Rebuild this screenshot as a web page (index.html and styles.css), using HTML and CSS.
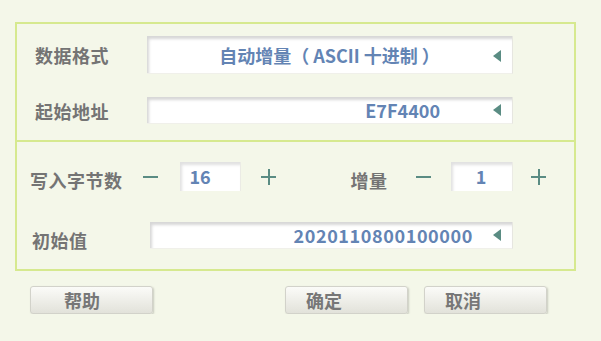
FILE: index.html
```html
<!DOCTYPE html>
<html>
<head>
    <meta charset="utf-8">
    <title>自动增量设置</title>
    <link rel="stylesheet" href="styles.css">
</head>
<body>
    <div class="panel">
        <div class="section section-top">
            <div class="row row-format">
                <span class="label">数据格式</span>
                <div class="field field-tall field-center">
                    <span class="value">自动增量（ ASCII 十进制 ）</span>
                    <span class="arrow"></span>
                </div>
            </div>
            <div class="row row-addr">
                <span class="label">起始地址</span>
                <div class="field field-addr">
                    <span class="value">E7F4400</span>
                    <span class="arrow"></span>
                </div>
            </div>
        </div>
        <div class="section section-bottom">
            <div class="row row-count">
                <span class="label label-count">写入字节数</span>
                <span class="step minus"></span>
                <div class="num">16</div>
                <span class="step plus"></span>
                <span class="label label-inc">增量</span>
                <span class="step minus"></span>
                <div class="num num-inc">1</div>
                <span class="step plus"></span>
            </div>
            <div class="row row-init">
                <span class="label label-init">初始值</span>
                <div class="field field-init">
                    <span class="value">2020110800100000</span>
                    <span class="arrow"></span>
                </div>
            </div>
        </div>
    </div>
    <div class="buttons">
        <button type="button" class="btn btn-help">帮助</button>
        <button type="button" class="btn btn-ok">确定</button>
        <button type="button" class="btn">取消</button>
    </div>
</body>
</html>
```

FILE: styles.css
```css
body {
    margin: 0;
    background: #f4f7e9;
    font-family: "Noto Sans CJK SC", "Noto Sans", sans-serif;
    font-weight: bold;
    font-size: 18px;
    color: #747474;
}
.panel {
    margin: 22px 0 0 15px;
    width: 557px;
    border: 2px solid #d6e98f;
}
.section-top {
    height: 118px;
    padding: 12px 0 0 18px;
    box-sizing: border-box;
    border-bottom: 2px solid #d6e98f;
}
.section-bottom {
    height: 127px;
    padding: 20px 0 0 13px;
    box-sizing: border-box;
}
.row {
    display: flex;
    align-items: center;
}
.row-addr {
    margin-top: 23px;
}
.label {
    width: 112px;
    flex: none;
    letter-spacing: 0.5px;
}
.field {
    width: 366px;
    height: 27px;
    background: #fff;
    box-shadow: inset 2px 3px 3px rgba(0, 0, 0, 0.16);
    border-right: 1px solid #e6e6e0;
    border-bottom: 1px solid #f0f0ea;
    display: flex;
    align-items: center;
    justify-content: flex-end;
    box-sizing: border-box;
    padding-right: 11px;
    color: #6384b4;
}
.field-tall {
    height: 38px;
}
.field-center {
    justify-content: center;
    position: relative;
    padding-right: 0;
}
.field-center .arrow {
    position: absolute;
    right: 11px;
    top: 14px;
}
.field-addr .value {
    margin-right: 53px;
}
.field-init {
    width: 363px;
}
.field-init .value {
    margin-right: 20px;
    letter-spacing: 0.6px;
}
.arrow {
    width: 0;
    height: 0;
    border-top: 6px solid transparent;
    border-bottom: 6px solid transparent;
    border-right: 8px solid #5a8c83;
}
.label-count {
    width: auto;
    margin-right: 20px;
}
.step {
    width: 15px;
    height: 15px;
    flex: none;
    position: relative;
}
.step::before,
.plus::after {
    content: "";
    position: absolute;
    background: #5a8c83;
}
.step::before {
    left: 0;
    top: 7px;
    width: 15px;
    height: 2px;
}
.plus::after {
    left: 7px;
    top: 0;
    width: 2px;
    height: 16px;
}
.num {
    width: 61px;
    height: 29px;
    margin: 0 20px 0 22px;
    background: #fff;
    box-shadow: inset 2px 3px 3px rgba(0, 0, 0, 0.12);
    border-right: 1px solid #ebebe5;
    box-sizing: border-box;
    padding-left: 10px;
    line-height: 29px;
    color: #6384b4;
}
.num-inc {
    width: 62px;
    padding-left: 0;
    text-align: center;
    margin: 0 18px 0 20px;
}
.label-inc {
    width: auto;
    margin: 0 28px 0 75px;
}
.row-count .label {
    position: relative;
    top: 3px;
}
.row-init {
    margin-top: 31px;
}
.label-init {
    width: 118px;
    margin-left: 2px;
    position: relative;
    top: 4px;
}
.buttons {
    display: flex;
    margin: 15px 0 0 30px;
}
.btn {
    width: 123px;
    height: 28px;
    padding: 0 0 0 20px;
    text-align: left;
    font-family: inherit;
    font-weight: bold;
    font-size: 18px;
    color: #777;
    background: linear-gradient(#fbfbf8, #e2e2da);
    border: 1px solid #d2d2ca;
    border-radius: 3px;
    box-shadow: 1px 1px 2px rgba(0, 0, 0, 0.18);
    margin-right: 16px;
}
.btn-help {
    padding-left: 33px;
    margin-right: 132px;
}
```
